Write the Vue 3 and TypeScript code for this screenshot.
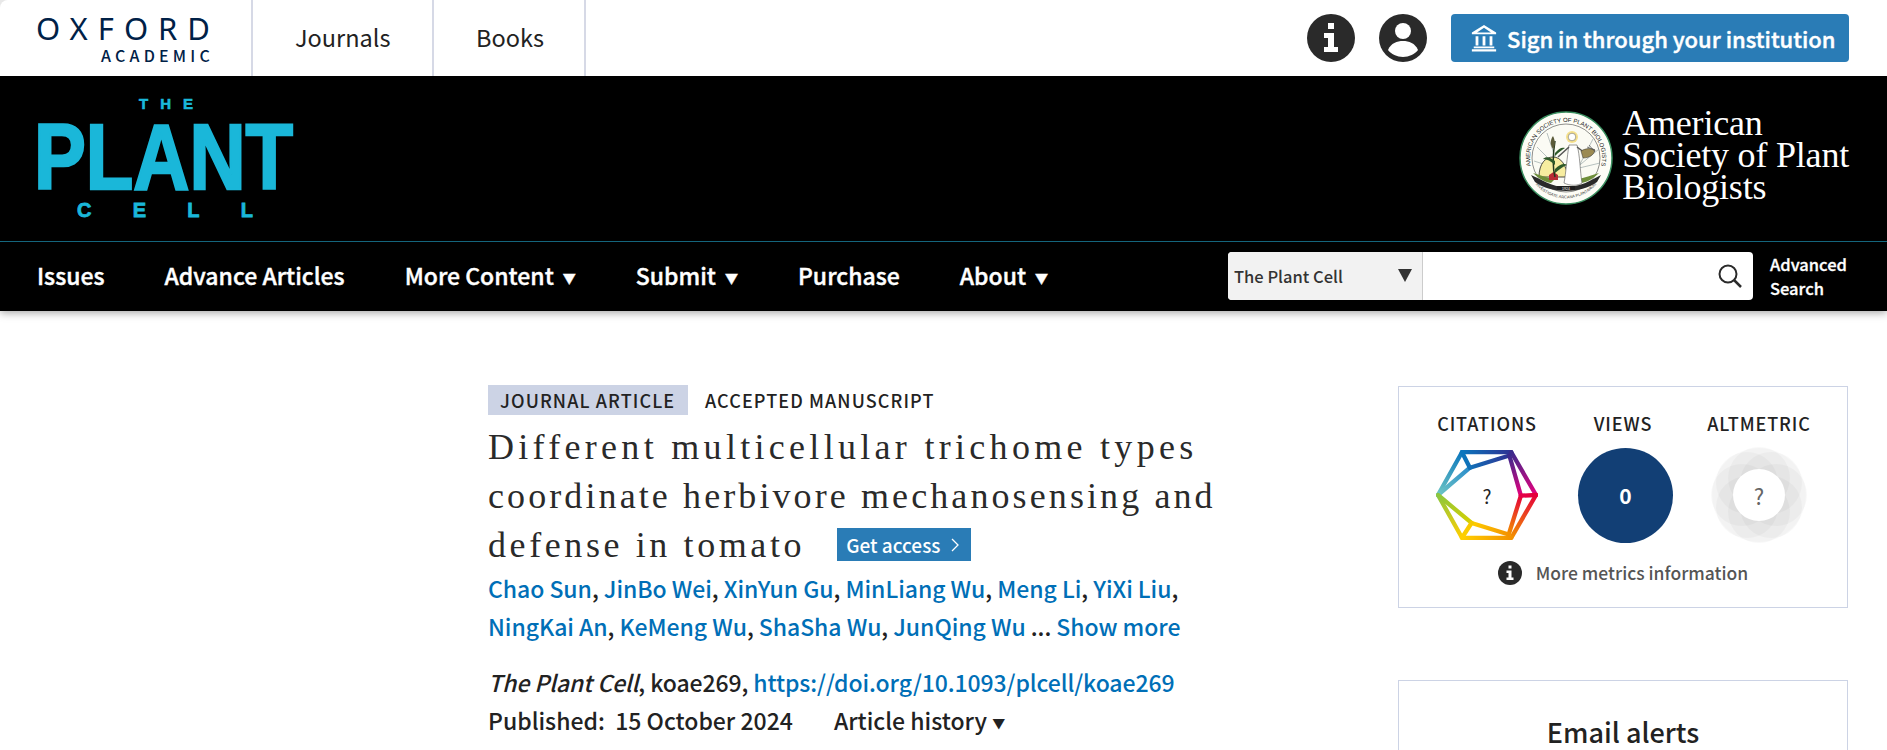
<template>
  <div class="page">
    <header class="topbar">
      <a class="oxford">
        <span class="oxford-name">OXFORD</span>
        <span class="oxford-sub">ACADEMIC</span>
      </a>
      <a class="top-link">Journals</a>
      <a class="top-link top-books">Books</a>
      <div class="top-right">
        <svg class="round-icon" viewBox="0 0 48 48">
          <circle cx="24" cy="24" r="24" fill="#2a2a2a" />
          <path d="M21 9h6v6h-6zM17 19h10v14h4v5H17v-5h4v-9h-4z" fill="#fff" />
        </svg>
        <svg class="round-icon" viewBox="0 0 48 48">
          <circle cx="24" cy="24" r="24" fill="#2a2a2a" />
          <circle cx="24" cy="17" r="8" fill="#fff" />
          <path d="M9 36c3-7 9-9 15-9s12 2 15 9c-3 4-9 7-15 7s-12-3-15-7z" fill="#fff" />
        </svg>
        <a class="signin">
          <svg class="bank" viewBox="0 0 30 30">
            <path d="M15 1 2 9v2h26V9zM15 4l7.500 5h-15z" fill="#fff" />
            <path d="M6 13h3v10H6zM13.500 13h3v10h-3zM21 13h3v10h-3zM4 24h22v2H4zM2 27h26v2.500H2z" fill="#fff" />
          </svg>
          Sign in through your institution
        </a>
      </div>
    </header>

    <section class="banner">
      <svg class="plant-logo" width="256" height="130" viewBox="0 0 256 130">
        <text x="101" y="17" textLength="54" class="plant-small">THE</text>
        <text x="-4" y="97" textLength="259" lengthAdjust="spacingAndGlyphs" class="plant-big">PLANT</text>
        <text x="39" y="125" textLength="176" class="plant-small plant-cell">CELL</text>
      </svg>
      <div class="society">
        <svg class="seal" width="94" height="94" viewBox="0 0 94 94">
          <defs>
            <path id="ringTop" d="M15.500 64.400A36 36 0 1 1 78.500 64.400" />
            <path id="ringBottom" d="M14 70A40 40 0 0 0 80 70" />
          </defs>
          <circle cx="47" cy="47" r="46" fill="#fdfdf6" stroke="#3b8f60" stroke-width="1.500" />
          <circle cx="47" cy="47" r="34" fill="#fbfbf4" stroke="#222" stroke-width=".5" />
          <text class="seal-ring"><textPath href="#ringTop" startOffset="50%" text-anchor="middle">AMERICAN SOCIETY OF PLANT BIOLOGISTS</textPath></text>
          <text class="seal-motto"><textPath href="#ringBottom" startOffset="50%" text-anchor="middle">INVESTIGATE ARCANA PLANTARUM</textPath></text>
          <path d="M40 58 18 36M40 58 28 22M40 58 15 50M56 58 80 38M56 58 81 52M60 55 74 28" stroke="#9aa7a8" stroke-width=".7" />
          <path d="M20 66c0-14 7-20 14-20 8 0 13 8 15 20z" fill="#f7eda0" stroke="#222" stroke-width=".8" />
          <path d="M12 64c10 4 20 12 35 12s25-7 35-12l-4 7c-8 6-20 9-31 9s-23-3-31-9z" fill="#2a2a2a" />
          <path d="M14 62c8 2 14 5 22 6l-4 4c-7-1-13-5-18-10zM80 62c-8 2-14 5-22 6l4 4c7-1 13-5 18-10z" fill="#6f8f3a" />
          <path d="M30 69h9v-5l-4.500-3-4.500 3z" fill="#b92b35" />
          <path d="M36 66c-3-12-2-24 0-36" fill="none" stroke="#23381e" stroke-width="1.500" />
          <path d="M36 50c-5-4-9-5-12-2 4 0 8 2 12 6zM36 42c4-5 7-6 10-5-3 2-6 4-10 8zM36 58c5-5 9-6 13-4-5 1-8 4-13 8z" fill="#2f5a2a" />
          <path d="M34 38c-3-4-3-9 0-13 2 4 3 9 0 13z" fill="#5b5b3a" />
          <path d="M50 34c-2 12-3 28-5 38 6 3 14 3 18 0-2-12-2-28-5-38z" fill="#fff" stroke="#555" stroke-width=".6" />
          <circle cx="53" cy="26" r="6" fill="#f5e08c" />
          <circle cx="53" cy="26" r="3.800" fill="#fff" stroke="#555" stroke-width=".5" />
          <path d="M50 36 39 46M58 36l8 6" stroke="#555" stroke-width="1.500" />
          <path d="M62 40c5-3 10-3 14-1-1 5-6 8-12 8z" fill="#9b8a52" stroke="#333" stroke-width=".5" />
          <path d="M68 36l8 3M70 34l6 7" stroke="#555" stroke-width=".7" />
          <path d="M38 75h18v4H38z" fill="#1e1e1e" />
          <text x="47" y="78.500" text-anchor="middle" class="seal-year">1924</text>
        </svg>
        <div class="society-name">American<br />Society of Plant<br />Biologists</div>
      </div>
    </section>

    <nav class="mainnav">
      <a v-for="item in navItems" :key="item.label" class="nav-item">
        {{ item.label }}<span v-if="item.menu" class="nav-caret">▼</span>
      </a>
      <div class="nav-search">
        <div class="search-box">
          <div class="search-select">
            The Plant Cell
            <span class="select-caret"></span>
          </div>
          <div class="search-input">
            <svg width="26" height="26" viewBox="0 0 26 26">
              <circle cx="11" cy="11" r="8.500" fill="none" stroke="#2b2b2b" stroke-width="2" />
              <path d="m17 17 7 7" stroke="#2b2b2b" stroke-width="2.500" />
            </svg>
          </div>
        </div>
        <a class="advanced">Advanced<br />Search</a>
      </div>
    </nav>

    <main class="content">
      <article class="article">
        <div class="tags">
          <span class="tag-type">JOURNAL ARTICLE</span>
          <span class="tag-state">ACCEPTED MANUSCRIPT</span>
        </div>
        <h1 class="title">
          <span class="line-a">Different multicellular trichome types</span><br />
          <span>coordinate herbivore mechanosensing and</span><br />
          <span class="line-c">defense in tomato</span>
          <a class="get-access">Get access
            <svg width="9" height="14" viewBox="0 0 9 14"><path d="m1 1 6 6-6 6" fill="none" stroke="#fff" stroke-width="1.300" /></svg>
          </a>
        </h1>
        <div class="authors">
          <div v-for="(line, i) in authorLines" :key="i">
            <template v-for="(name, j) in line" :key="name"><a>{{ name }}</a><span v-if="j < line.length - 1 || i === 0">, </span></template>
            <template v-if="i === 1"> ... <a>Show more</a></template>
          </div>
        </div>
        <div class="cite">
          <em>The Plant Cell</em>, koae269, <a>https://doi.org/10.1093/plcell/koae269</a>
        </div>
        <div class="dates">
          <span>Published:&nbsp; 15 October 2024</span>
          <span class="history">Article history <i class="history-caret">▼</i></span>
        </div>
      </article>

      <aside class="side">
        <div class="metrics">
          <div class="metric-row">
            <div class="metric">
              <div class="metric-label">CITATIONS</div>
              <div class="badge">
                <svg width="102" height="90" viewBox="-6 -6 310 272">
                  <defs>
                    <linearGradient v-for="(e, i) in hexEdges" :id="`edge${i}`" :key="i" gradientUnits="userSpaceOnUse" :x1="e.x1" :y1="e.y1" :x2="e.x2" :y2="e.y2">
                      <stop offset="0" :stop-color="e.from" />
                      <stop offset="1" :stop-color="e.to" />
                    </linearGradient>
                  </defs>
                  <line v-for="(e, i) in hexEdges" :key="i" :x1="e.x1" :y1="e.y1" :x2="e.x2" :y2="e.y2" :stroke="`url(#edge${i})`" stroke-width="13" stroke-linecap="round" />
                </svg>
                <span class="badge-q">?</span>
              </div>
            </div>
            <div class="metric">
              <div class="metric-label">VIEWS</div>
              <div class="badge"><div class="views-circle">0</div></div>
            </div>
            <div class="metric">
              <div class="metric-label">ALTMETRIC</div>
              <div class="badge">
                <svg width="96" height="96" viewBox="0 0 96 96">
                  <circle v-for="a in petals" :key="a" r="31" :cx="48 + 17 * Math.cos(a)" :cy="48 + 17 * Math.sin(a)" fill="#000" fill-opacity=".028" />
                  <circle cx="48" cy="48" r="47" fill="#000" fill-opacity=".02" />
                  <circle cx="48" cy="48" r="26" fill="#fff" />
                </svg>
                <span class="badge-q badge-q-grey">?</span>
              </div>
            </div>
          </div>
          <div class="more-metrics">
            <svg width="24" height="24" viewBox="0 0 48 48">
              <circle cx="24" cy="24" r="24" fill="#2a2a2a" />
              <path d="M21 9h6v6h-6zM17 19h10v14h4v5H17v-5h4v-9h-4z" fill="#fff" />
            </svg>
            More metrics information
          </div>
        </div>
        <div class="alerts">
          <h2>Email alerts</h2>
        </div>
      </aside>
    </main>
  </div>
</template>

<script setup lang="ts">
interface NavItem {
  label: string
  menu?: boolean
}

interface HexEdge {
  x1: number
  y1: number
  x2: number
  y2: number
  from: string
  to: string
}

const navItems: NavItem[] = [
  { label: 'Issues' },
  { label: 'Advance Articles' },
  { label: 'More Content', menu: true },
  { label: 'Submit', menu: true },
  { label: 'Purchase' },
  { label: 'About', menu: true }
]

const authorLines: string[][] = [
  ['Chao Sun', 'JinBo Wei', 'XinYun Gu', 'MinLiang Wu', 'Meng Li', 'YiXi Liu'],
  ['NingKai An', 'KeMeng Wu', 'ShaSha Wu', 'JunQing Wu']
]

// points of the dimensions badge
const L = [0, 130]
const TL = [73, 0]
const TR = [223, 0]
const R = [298, 130]
const BR = [223, 260]
const BL = [73, 260]
const A = [97, 47]
const TRi = [217, 10]
const B = [252, 132]
const BRi = [215, 250]
const D = [102, 215]

const edge = (p: number[], q: number[], from: string, to: string): HexEdge => ({
  x1: p[0], y1: p[1], x2: q[0], y2: q[1], from, to
})

const hexEdges: HexEdge[] = [
  edge(TL, TR, '#0a76bd', '#2e3192'),
  edge(TR, R, '#3a2a8c', '#e6007e'),
  edge(R, BR, '#e4003a', '#f39200'),
  edge(BR, BL, '#f39200', '#ffd000'),
  edge(BL, L, '#ffcf00', '#8cc63f'),
  edge(L, TL, '#6ec6c4', '#0a76bd'),
  edge(L, A, '#6ec6c4', '#2a8ccb'),
  edge(A, TRi, '#1170b8', '#2e3192'),
  edge(TRi, B, '#3a2a8c', '#e6007e'),
  edge(B, BRi, '#e4003a', '#f39200'),
  edge(BRi, D, '#f39200', '#ffcf00'),
  edge(D, L, '#d6d000', '#8cc63f'),
  edge(TL, A, '#0a76bd', '#1170b8'),
  edge(R, B, '#e4003a', '#e4004a'),
  edge(BL, D, '#ffcf00', '#f5c800')
]

const petals: number[] = Array.from({ length: 8 }, (_, i) => (i * Math.PI) / 4)
</script>

<style scoped>
.page {
  width: 1887px;
  height: 750px;
  overflow: hidden;
  background: #fff;
  color: #222;
  font-family: "Noto Sans CJK SC", "Noto Sans", sans-serif;
  border-top-left-radius: 8px;
}

a {
  color: inherit;
  text-decoration: none;
}

.topbar {
  display: flex;
  align-items: stretch;
  height: 76px;
}

.oxford {
  width: 253px;
  box-sizing: border-box;
  padding: 10px 41px 0 0;
  display: flex;
  flex-direction: column;
  align-items: flex-end;
  color: #002147;
  border-right: 2px solid #d6d9e6;
}

.oxford-name {
  font-family: "Noto Sans", sans-serif;
  font-size: 31px;
  line-height: 36px;
  letter-spacing: 10px;
  margin-right: -10px;
}

.oxford-sub {
  font-size: 16px;
  font-weight: 500;
  line-height: 18px;
  letter-spacing: 4.200px;
  margin-right: -4px;
}

.top-link {
  display: flex;
  align-items: center;
  padding: 0 0 2px 42px;
  font-size: 23.500px;
  color: #222;
  width: 181px;
  box-sizing: border-box;
  border-right: 2px solid #d6d9e6;
}

.top-books {
  width: 152px;
}

.top-right {
  margin-left: auto;
  display: flex;
  align-items: center;
  gap: 24px;
  padding-right: 38px;
}

.round-icon {
  width: 48px;
  height: 48px;
}

.signin {
  width: 398px;
  height: 48px;
  box-sizing: border-box;
  background: #2a7cb6;
  border-radius: 4px;
  color: #fff;
  display: flex;
  align-items: center;
  gap: 9px;
  padding-left: 19px;
  font-size: 22px;
  font-weight: 500;
  -webkit-text-stroke: .4px #fff;
  white-space: nowrap;
}

.bank {
  flex: none;
  width: 28px;
  height: 28px;
}

.banner {
  height: 166px;
  box-sizing: border-box;
  background: #000;
  border-bottom: 1px solid #17718a;
  display: flex;
  justify-content: space-between;
  padding: 16px 38px 0;
}

.plant-logo {
  flex: none;
  overflow: visible;
}

.plant-big {
  font-family: "Liberation Sans", sans-serif;
  font-weight: 700;
  font-size: 93px;
  fill: #1ab7d9;
  stroke: #1ab7d9;
  stroke-width: 2.500px;
}

.plant-small {
  font-family: "Liberation Sans", sans-serif;
  font-weight: 700;
  font-size: 15px;
  fill: #1ab7d9;
  stroke: #1ab7d9;
  stroke-width: .6px;
}

.plant-cell {
  font-size: 20px;
  stroke-width: .8px;
}

.society {
  display: flex;
  align-items: flex-start;
  gap: 9px;
  padding-top: 19px;
}

.seal {
  flex: none;
}

.seal-ring {
  font-family: "Liberation Sans", sans-serif;
  font-size: 6px;
  fill: #222;
}

.seal-motto {
  font-family: "Liberation Sans", sans-serif;
  font-size: 4px;
  fill: #333;
}

.seal-year {
  font-family: "Liberation Sans", sans-serif;
  font-size: 3.500px;
  fill: #fff;
}

.society-name {
  font-family: "Liberation Serif", serif;
  font-size: 36px;
  line-height: 32px;
  color: #fff;
  letter-spacing: -.2px;
  margin-top: -4px;
  white-space: nowrap;
}

.mainnav {
  height: 69px;
  box-sizing: border-box;
  background: #000;
  box-shadow: 0 2px 8px rgba(0, 0, 0, .35);
  position: relative;
  display: flex;
  align-items: center;
  gap: 60px;
  padding: 0 38px 0 37px;
  color: #fff;
}

.nav-item {
  font-size: 23px;
  font-weight: 500;
  -webkit-text-stroke: .4px #fff;
  white-space: nowrap;
  margin-bottom: 3px;
}

.nav-caret {
  font-size: 13px;
  margin-left: 9px;
  vertical-align: 2px;
}

.nav-search {
  margin-left: auto;
  display: flex;
  align-items: center;
  gap: 17px;
  margin-bottom: 2px;
}

.search-box {
  width: 525px;
  height: 48px;
  display: flex;
  border-radius: 4px;
  overflow: hidden;
  background: #fff;
}

.search-select {
  width: 195px;
  box-sizing: border-box;
  background: #f2f2f2;
  border-right: 1px solid #ccc;
  color: #333;
  font-size: 16.500px;
  font-weight: 500;
  padding-left: 6px;
  display: flex;
  align-items: center;
  justify-content: space-between;
  padding-right: 10px;
}

.select-caret {
  width: 0;
  height: 0;
  border-left: 7px solid transparent;
  border-right: 7px solid transparent;
  border-top: 13px solid #333;
}

.search-input {
  flex: 1;
  display: flex;
  align-items: center;
  justify-content: flex-end;
  padding-right: 10px;
}

.advanced {
  font-size: 16.500px;
  font-weight: 500;
  -webkit-text-stroke: .3px #fff;
  line-height: 24px;
  width: 79px;
}

.content {
  display: flex;
  align-items: flex-start;
  padding: 74px 39px 0 488px;
}

.article {
  width: 760px;
}

.tags {
  display: flex;
  align-items: center;
  gap: 17px;
  height: 30px;
  font-size: 18px;
  font-weight: 500;
  letter-spacing: 1.100px;
}

.tag-type {
  background: #ccd3e5;
  height: 30px;
  line-height: 30px;
  width: 200px;
  box-sizing: border-box;
  padding-left: 12px;
}

.title {
  font-family: "Liberation Serif", serif;
  font-size: 36px;
  font-weight: 400;
  line-height: 49px;
  margin: 8px 0 0;
  color: #2a2a2a;
  letter-spacing: 3.100px;
  white-space: nowrap;
}

.line-a {
  letter-spacing: 4.300px;
}

.line-c {
  letter-spacing: 3.600px;
}

.get-access {
  display: inline-flex;
  align-items: center;
  gap: 11px;
  vertical-align: 4px;
  margin-left: 32px;
  height: 33px;
  width: 134px;
  box-sizing: border-box;
  padding-left: 9px;
  background: #2a7cb6;
  color: #fff;
  font-family: "Noto Sans CJK SC", sans-serif;
  font-size: 19px;
  font-weight: 500;
  letter-spacing: 0;
}

.authors {
  font-size: 23px;
  font-weight: 500;
  line-height: 38px;
  margin-top: -1px;
  letter-spacing: -.05px;
  color: #222;
}

.authors a,
.cite a {
  color: #006fb7;
}

.cite {
  font-size: 23px;
  font-weight: 500;
  line-height: 38px;
  margin-top: 18px;
  letter-spacing: -.1px;
}

.dates {
  font-size: 23px;
  font-weight: 500;
  line-height: 38px;
  display: flex;
  gap: 41px;
}

.history-caret {
  font-size: 13px;
  font-style: normal;
  vertical-align: 2px;
}

.side {
  margin-left: auto;
  margin-top: 1px;
  width: 450px;
}

.metrics,
.alerts {
  box-sizing: border-box;
  border: 1px solid #ccd3e5;
}

.metrics {
  height: 222px;
  padding: 26px 38px 0;
}

.metric-row {
  display: flex;
  justify-content: space-between;
}

.metric {
  width: 100px;
  display: flex;
  flex-direction: column;
  align-items: center;
}

.metric-label {
  font-size: 18px;
  font-weight: 500;
  letter-spacing: .9px;
  line-height: 20px;
  white-space: nowrap;
}

.badge {
  position: relative;
  height: 96px;
  margin-top: 14px;
  display: flex;
  align-items: center;
  justify-content: center;
}

.badge-q {
  position: absolute;
  left: 0;
  right: 0;
  top: 50%;
  transform: translateY(-50%);
  text-align: center;
  font-size: 19px;
  color: #222;
}

.badge-q-grey {
  color: #666;
  font-size: 22px;
}

.views-circle {
  width: 95px;
  height: 95px;
  margin-left: 5px;
  border-radius: 50%;
  background: #123f75;
  color: #fff;
  font-size: 21px;
  font-weight: 700;
  display: flex;
  align-items: center;
  justify-content: center;
}

.more-metrics {
  display: flex;
  align-items: center;
  justify-content: center;
  gap: 14px;
  margin-top: 17px;
  font-size: 17.500px;
  font-weight: 500;
  color: #555;
}

.alerts {
  height: 200px;
  margin-top: 72px;
  padding-top: 31px;
}

.alerts h2 {
  margin: 0;
  text-align: center;
  font-size: 27px;
  font-weight: 500;
  line-height: 40px;
  color: #222;
}
</style>

<style>
html,
body {
  margin: 0;
  overflow: hidden;
  background: #e8e8e8;
}
</style>
